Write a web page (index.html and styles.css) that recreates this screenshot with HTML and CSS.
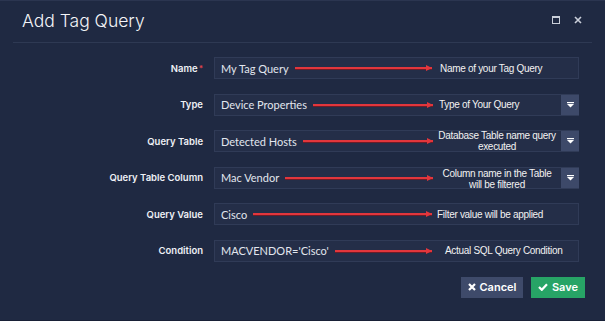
FILE: index.html
```html
<!DOCTYPE html>
<html>
<head>
<meta charset="utf-8">
<link rel="stylesheet" href="styles.css">
</head>
<body>
<div class="dialog">
  <div class="header">
    <h1 class="title">Add Tag Query</h1>
    <div class="tools">
      <svg class="tool" width="8" height="8" viewBox="0 0 8 8"><rect x="0.5" y="0.5" width="7" height="7" fill="none" stroke="#c9ced9" stroke-width="1"/><rect x="0" y="0" width="8" height="2" fill="#c9ced9"/></svg>
      <svg class="tool" width="8" height="8" viewBox="0 0 8 8"><path d="M1 1L7 7M7 1L1 7" stroke="#c9ced9" stroke-width="1.6"/></svg>
    </div>
  </div>
  <div class="form">
    <div class="row">
      <label class="label">Name<span class="req">*</span></label>
      <div class="field">
        <span class="value">My Tag Query</span><span class="arrow"></span>
        <span class="note note-name">Name of your Tag Query</span><span class="caret"></span>
      </div>
    </div>
    <div class="row">
      <label class="label">Type</label>
      <div class="field">
        <span class="value">Device Properties</span><span class="arrow"></span>
        <span class="note note-type">Type of Your Query</span>
        <span class="caret select"><svg width="7" height="6" viewBox="0 0 7 6"><rect x="0" y="0" width="7" height="1.2" fill="#fff"/><path d="M0 2H7L3.5 5.5Z" fill="#fff"/></svg></span>
      </div>
    </div>
    <div class="row">
      <label class="label">Query Table</label>
      <div class="field">
        <span class="value">Detected Hosts</span><span class="arrow"></span>
        <span class="note note-wrap">Database Table name query<br>executed</span>
        <span class="caret select"><svg width="7" height="6" viewBox="0 0 7 6"><rect x="0" y="0" width="7" height="1.2" fill="#fff"/><path d="M0 2H7L3.5 5.5Z" fill="#fff"/></svg></span>
      </div>
    </div>
    <div class="row">
      <label class="label">Query Table Column</label>
      <div class="field">
        <span class="value">Mac Vendor</span><span class="arrow"></span>
        <span class="note note-wrap note-low">Column name in the Table<br>will be filtered</span>
        <span class="caret select"><svg width="7" height="6" viewBox="0 0 7 6"><rect x="0" y="0" width="7" height="1.2" fill="#fff"/><path d="M0 2H7L3.5 5.5Z" fill="#fff"/></svg></span>
      </div>
    </div>
    <div class="row">
      <label class="label">Query Value</label>
      <div class="field">
        <span class="value">Cisco</span><span class="arrow"></span>
        <span class="note note-filter">Filter value will be applied</span><span class="caret"></span>
      </div>
    </div>
    <div class="row">
      <label class="label">Condition</label>
      <div class="field">
        <span class="value">MACVENDOR='Cisco'</span><span class="arrow"></span>
        <span class="note note-sql">Actual SQL Query Condition</span><span class="caret"></span>
      </div>
    </div>
  </div>
  <div class="actions">
    <button class="btn btn-cancel"><svg width="8" height="8" viewBox="0 0 8 8"><path d="M1 1L7 7M7 1L1 7" stroke="#fff" stroke-width="2.2"/></svg>Cancel</button>
    <button class="btn btn-save"><svg width="10" height="8" viewBox="0 0 10 8"><path d="M1 4L3.8 6.8L9 1.2" fill="none" stroke="#fff" stroke-width="2.2"/></svg>Save</button>
  </div>
</div>
</body>
</html>
```

FILE: styles.css
```css
* { box-sizing: border-box; }
html, body { margin: 0; padding: 0; }
body {
  width: 605px;
  height: 321px;
  background: #1f2942;
  font-family: "Inter", "Noto Sans", sans-serif;
  color: #e9ecf2;
  overflow: hidden;
}
.dialog {
  height: 321px;
  border-top: 1px solid #2b3550;
  border-bottom: 1px solid #182036;
  display: flex;
  flex-direction: column;
}
.header {
  height: 42px;
  margin: 0 13px;
  padding: 0 10px 0 9px;
  border-bottom: 1px solid #2e3953;
  display: flex;
  align-items: center;
  justify-content: space-between;
}
.title {
  margin: 0;
  font-size: 17.5px;
  font-weight: 300;
  color: #f4f5f8;
  letter-spacing: 0;
  padding-bottom: 3px;
}
.tools {
  display: flex;
  gap: 14px;
  align-items: center;
  padding-bottom: 4px;
}
.tool { display: block; }
.form {
  padding-top: 14px;
  display: flex;
  flex-direction: column;
  gap: 14.5px;
}
.row {
  display: flex;
  align-items: center;
  height: 22px;
}
.label {
  width: 203px;
  text-align: right;
  font-size: 9.5px;
  font-weight: 600;
  color: #eef0f5;
  margin-right: 11px;
}
.req { color: #e0434b; font-size: 8px; vertical-align: top; margin-left: 1px; }
.field {
  width: 365px;
  height: 22px;
  background: #242e48;
  border: 1px solid #303b57;
  display: flex;
  align-items: center;
  font-family: "Lato", "Inter", sans-serif;
  font-size: 11px;
  color: #e2e6ee;
}
.value { padding-left: 6px; white-space: nowrap; flex: none; }
.arrow {
  flex: 1;
  height: 2px;
  background: #e2363c;
  margin: 0 0 0 6px;
  position: relative;
  box-shadow: 0 1px 0 #6e1c27;
}
.arrow::after {
  content: "";
  position: absolute;
  right: 0;
  top: -2px;
  border-left: 6px solid #e2363c;
  border-top: 3px solid transparent;
  border-bottom: 3px solid transparent;
}
.note {
  flex: none;
  width: 128px;
  font-family: "Liberation Sans", Arial, sans-serif;
  font-size: 10px;
  letter-spacing: -0.3px;
  line-height: 11px;
  color: #f2f2f2;
  white-space: nowrap;
}
.note-name { padding-left: 8px; }
.note-type { padding-left: 6px; }
.note-filter { padding-left: 5px; }
.note-sql { padding-left: 13px; }
.note-wrap {
  text-align: center;
  padding: 0 2px;
}
.note-low { padding-top: 3px; }
.caret {
  flex: none;
  width: 18px;
  align-self: stretch;
  display: flex;
  align-items: center;
  justify-content: center;
}
.caret svg { display: block; }
.caret.select { background: #3d4969; margin-right: -1px; }
.actions {
  display: flex;
  justify-content: flex-end;
  gap: 8px;
  padding-right: 20px;
  margin-top: 15px;
}
.btn {
  height: 21px;
  border: none;
  display: flex;
  align-items: center;
  justify-content: center;
  gap: 4px;
  font-family: "Inter", "Noto Sans", sans-serif;
  font-size: 11px;
  font-weight: 600;
  color: #ffffff;
  padding: 0;
}
.btn-cancel { width: 62px; background: #3e4a6a; }
.btn-save { width: 54px; background: #27a466; }
```
